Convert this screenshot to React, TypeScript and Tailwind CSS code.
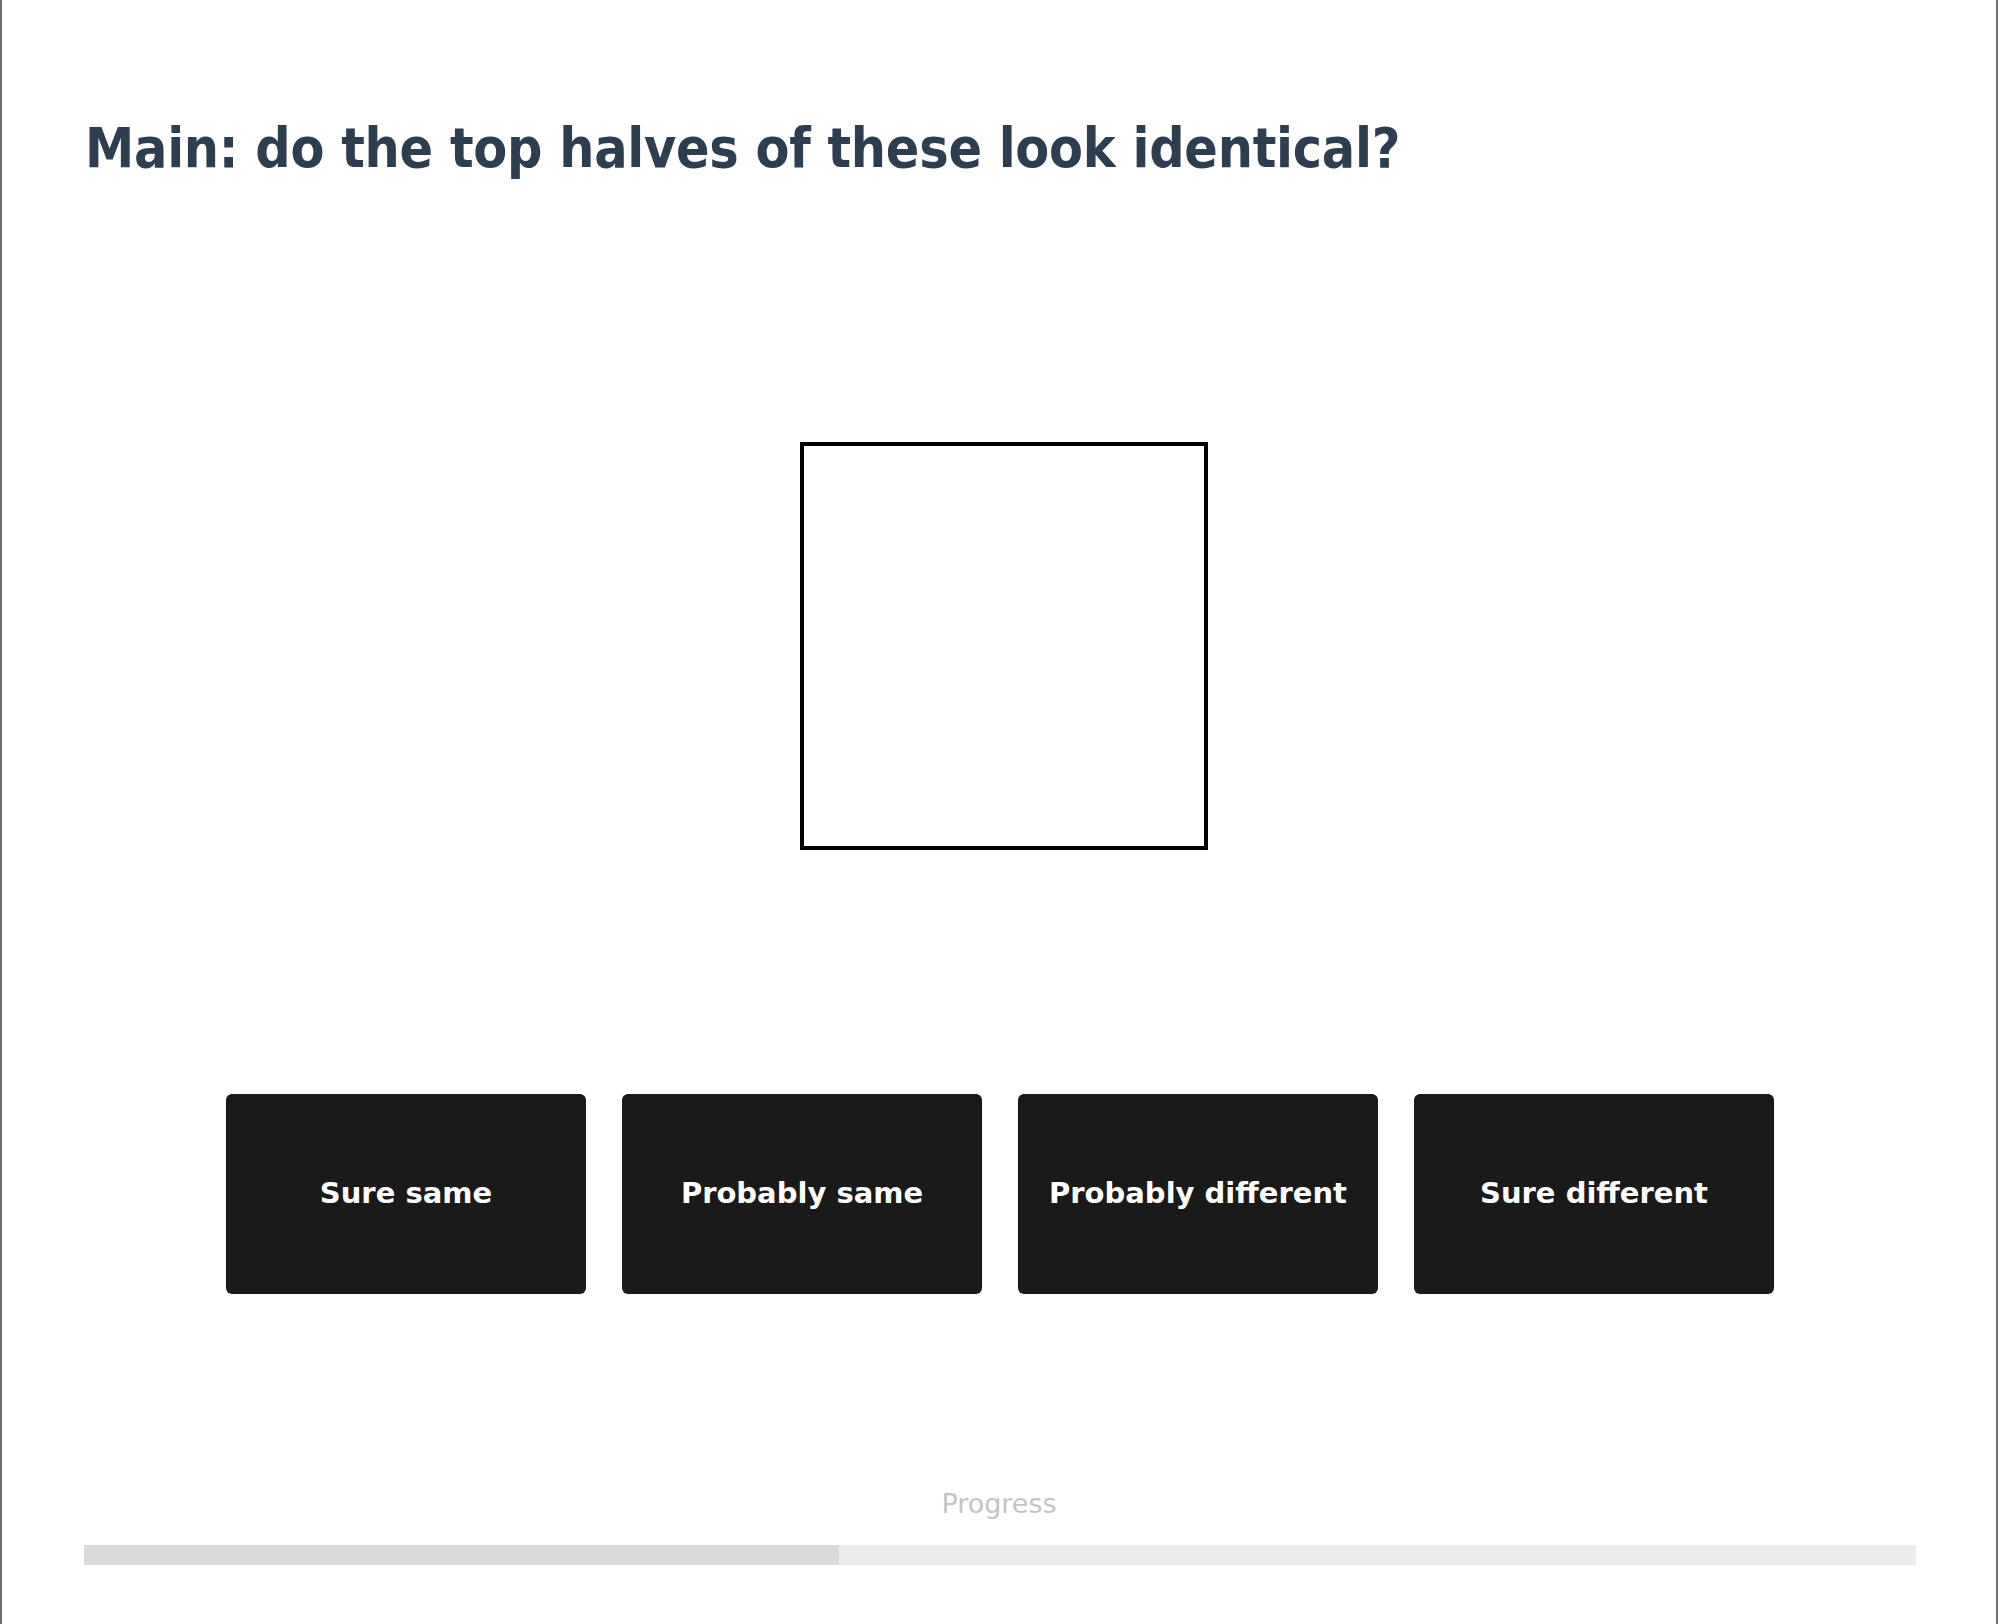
import React from "react";

const buttons = ["Sure same", "Probably same", "Probably different", "Sure different"];

export default function App() {
  return (
    <div className="w-[2000px] h-[1624px] bg-white">
      <div className="w-[1998px] h-[1624px] border-l-2 border-r-2 border-[#6e6e6e] bg-white flex flex-col">
        <div className="px-[83px] pt-[115px]">
          <h1
            className="text-[55px] leading-[66px] font-bold text-[#2c3e50] tracking-[-0.25px]"
            style={{ fontFamily: '"DejaVu Sans Condensed", "DejaVu Sans", sans-serif', fontStretch: "condensed" }}
          >
            Main: do the top halves of these look identical?
          </h1>
        </div>
        <div className="flex justify-center pl-[9px] mt-[261px]">
          <div className="w-[408px] h-[408px] border-4 border-black bg-white" />
        </div>
        <div className="flex justify-center gap-[36px] pl-[2px] mt-[244px]">
          {buttons.map((b) => (
            <button
              key={b}
              className="w-[360px] h-[200px] rounded-[6px] bg-[#1a1a1a] text-white text-[29px] font-bold flex items-center justify-center"
              style={{ fontFamily: '"DejaVu Sans", sans-serif' }}
            >
              {b}
            </button>
          ))}
        </div>
        <div
          className="mt-[194px] text-center text-[27px] leading-[32px] text-[#c4c4c4]"
          style={{ fontFamily: '"DejaVu Sans", sans-serif' }}
        >
          Progress
        </div>
        <div className="ml-[82px] mr-[80px] mt-[25px] h-[20px] bg-[#ececec] flex">
          <div className="h-full bg-[#dadada]" style={{ width: "41.2%" }} />
        </div>
      </div>
    </div>
  );
}
